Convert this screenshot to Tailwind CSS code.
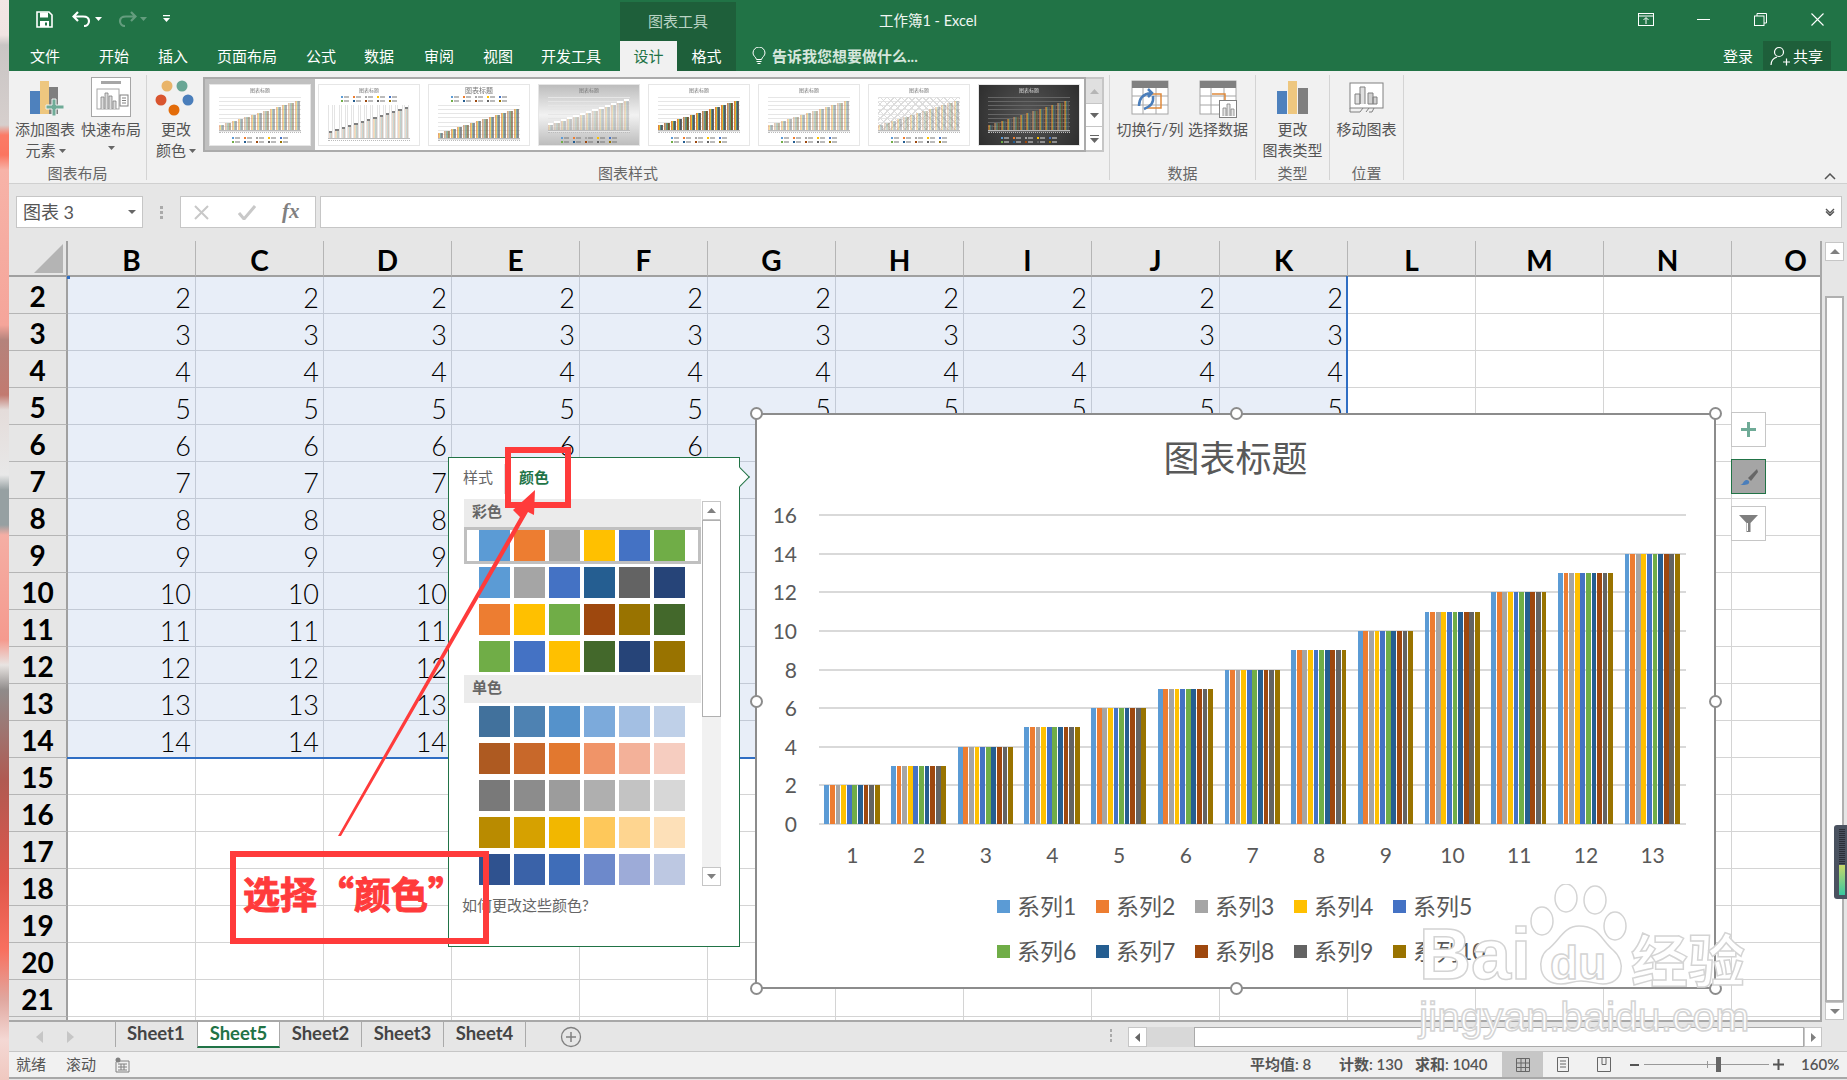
<!DOCTYPE html>
<html lang="zh">
<head>
<meta charset="utf-8">
<title>工作簿1 - Excel</title>
<script src="https://cdn.jsdelivr.net/npm/@tailwindcss/browser@4"></script>
</head>
<body class="relative flex w-[1847px] h-[1080px] overflow-hidden bg-[#e6e6e6] [font-family:Lato,'Noto_Sans_CJK_SC',sans-serif]">

<!-- blurred desktop strip on the left -->
<div class="w-[9px] shrink-0 h-full bg-[linear-gradient(180deg,#f3e6e4_0,#f1e4e2_35px,#c9c5c4_45px,#d6cfcd_125px,#fb7b66_135px,#fb7560_155px,#f7b3a8_170px,#f5a59a_325px,#b4837c_340px,#c27a70_395px,#e4dcda_410px,#e8e8e8_475px,#96a0a2_490px,#96a0a2_525px,#f5aea4_535px,#f59a8e_640px,#e8e4e2_665px,#8f8b8a_690px,#b05a52_780px,#e0564a_880px,#f8705f_950px,#e0a8a0_1000px,#f4d8d4_1040px,#f0c8c0_1080px)]"></div>

<div class="flex flex-col flex-1 min-w-0">

  <!-- title bar -->
  <div class="flex h-[41px] bg-[#217346] text-white shrink-0">
    <div class="flex items-center w-[611px] shrink-0 pl-[27px] pb-[3px]">
      <svg width="17" height="17" viewBox="0 0 17 17" class="mr-[19px]"><path d="M1 1h12l3 3v12H1z" fill="none" stroke="#fff" stroke-width="1.6"/><rect x="4" y="1.5" width="8" height="5" fill="#fff"/><rect x="4" y="10" width="9" height="6" fill="#fff"/><rect x="9" y="11.5" width="2" height="3" fill="#217346"/></svg>
      <svg width="20" height="16" viewBox="0 0 20 16" class="mr-[3px]"><path d="M6 1 1.5 5.5 6 10M2 5.5h9c4 0 6 2 6 4.5s-2 5-5 5" fill="none" stroke="#fff" stroke-width="2.2"/></svg>
      <svg width="7" height="4" viewBox="0 0 7 4" class="mr-[15px]"><path d="M0 0h7L3.5 4z" fill="#fff"/></svg>
      <svg width="20" height="16" viewBox="0 0 20 16" class="mr-[3px] opacity-30"><path d="M14 1l4.500 4.500-4.500 4.500M18 5.500H9c-4 0-6 2-6 4.500s2 5 5 5" fill="none" stroke="#fff" stroke-width="2.2"/></svg>
      <svg width="7" height="4" viewBox="0 0 7 4" class="mr-[16px] opacity-30"><path d="M0 0h7L3.500 4z" fill="#fff"/></svg>
      <svg width="7" height="8" viewBox="0 0 7 8"><path d="M0 0h7v1.200H0zM0 3h7L3.500 7z" fill="#fff"/></svg>
    </div>
    <div class="w-[116px] shrink-0 mt-[2px] bg-[#1e5f3a] text-center text-[15px] leading-[39px] text-[#b9d3c3]">图表工具</div>
    <div class="w-[143px] shrink-0"></div>
    <div class="w-[100px] shrink-0 text-[14.5px] leading-[42px] whitespace-nowrap text-[#f0f6f2]">工作簿1 - Excel</div>
    <div class="flex-1 flex items-center pb-[2px] pl-[659px]">
      <svg width="16" height="13" viewBox="0 0 16 13" class="mr-[43px]"><rect x=".5" y=".5" width="15" height="12" fill="none" stroke="#fff"/><path d="M1 3h14M8 11V5M5.500 7 8 4.500 10.500 7" fill="none" stroke="#fff"/></svg>
      <div class="w-[13px] h-[1.500px] bg-white mr-[44px]"></div>
      <svg width="13" height="13" viewBox="0 0 13 13" class="mr-[44px]"><path d="M3 3V.5h9.500V10H10" fill="none" stroke="#fff"/><rect x=".5" y="3" width="9.500" height="9.500" fill="none" stroke="#fff"/></svg>
      <svg width="13" height="13" viewBox="0 0 13 13"><path d="M.5.5l12 12M12.500.5l-12 12" stroke="#fff" stroke-width="1.100"/></svg>
    </div>
  </div>

  <!-- ribbon tabs -->
  <div class="flex h-[30px] bg-[#217346] text-white text-[15px] leading-[30px] shrink-0">
    <div class="flex w-[611px] shrink-0 pl-[21px]">
      <span class="w-[69px]">文件</span>
      <span class="w-[59px]">开始</span>
      <span class="w-[59px]">插入</span>
      <span class="w-[89px]">页面布局</span>
      <span class="w-[58px]">公式</span>
      <span class="w-[60px]">数据</span>
      <span class="w-[59px]">审阅</span>
      <span class="w-[58px]">视图</span>
      <span class="whitespace-nowrap">开发工具</span>
    </div>
    <div class="flex w-[116px] shrink-0 bg-[#1e5f3a]">
      <div class="w-[57px] bg-[#f1f1f1] text-[#217346] text-center">设计</div>
      <div class="w-[59px] text-center">格式</div>
    </div>
    <div class="flex items-center w-[987px] shrink-0 pl-[16px] font-bold text-[#d5e6dc]">
      <svg width="14" height="18" viewBox="0 0 14 18" class="mr-[6px]"><path d="M4.500 12.500C4 10 1 9 1 6a6 6 0 0 1 12 0c0 3-3 4-3.500 6.500z" fill="none" stroke="#fff"/><path d="M4.500 14.500h5M5.500 16.500h3" stroke="#fff"/></svg>
      <span class="whitespace-nowrap">告诉我您想要做什么...</span>
    </div>
    <div class="flex items-center w-[30px] shrink-0 whitespace-nowrap">登录</div>
    <div class="flex items-center w-[68px] shrink-0 ml-[10px] bg-[#1e5f3a] h-[29px] pl-[7px]">
      <svg width="20" height="20" viewBox="0 0 20 20" class="mr-[3px] shrink-0"><circle cx="9" cy="6" r="4.500" fill="none" stroke="#fff" stroke-width="1.200"/><path d="M1 19c0-5 3-7 6-8M13 16h7M16.500 12.500v7" fill="none" stroke="#fff" stroke-width="1.200"/></svg>
      <span class="whitespace-nowrap">共享</span>
    </div>
  </div>

  <!-- ribbon -->
  <div class="flex h-[113px] bg-[#f1f1f1] border-b border-[#d0d0d0] text-[15px] text-[#555] shrink-0">

    <div class="flex flex-col w-[138px] h-[105px] mt-[4px] border-r border-[#d4d4d4]">
      <div class="flex h-[88px] pt-[5px] pl-[6px]">
        <div class="flex flex-col items-center w-[60px]">
          <svg width="36" height="39" viewBox="0 0 36 39" class="ml-[3px]"><rect x="1" y="11" width="10" height="23" fill="#4e81bd"/><rect x="11" y="1" width="9" height="33" fill="#eec77f"/><rect x="20" y="7" width="9" height="27" fill="#7f7f7f"/><path d="M23 19h4v6h8v4h-8v7h-4v-7h-6v-4h6z" fill="#6fab97" stroke="#f1f1f1"/></svg>
          <div class="leading-[21px] whitespace-nowrap">添加图表</div>
          <div class="flex items-center leading-[21px] whitespace-nowrap ml-[1px]">元素<svg width="7" height="4" class="ml-[3px]"><path d="M0 0h7L3.500 4z" fill="#666"/></svg></div>
        </div>
        <div class="flex flex-col items-center w-[60px] ml-[6px]">
          <div class="h-[39px] -mt-[3px] mb-[3px]">
            <svg width="40" height="40" viewBox="0 0 40 40"><rect x=".5" y=".5" width="39" height="39" fill="#fff" stroke="#a6a6a6"/><rect x="10" y="4" width="20" height="3" fill="#a6a6a6"/><rect x="6" y="12" width="22" height="20" fill="none" stroke="#a6a6a6"/><path d="M10 32V20h3v12M14 32V16h3v16M18 32V19h3v13M22 32V24h3v8" fill="#ddd" stroke="#808080" stroke-width=".8"/><rect x="29" y="18" width="8" height="11" fill="#fff" stroke="#808080"/><path d="M31 21h4M31 23.500h4M31 26h4" stroke="#808080"/></svg>
          </div>
          <div class="leading-[21px] whitespace-nowrap">快速布局</div>
          <svg width="7" height="4" class="mt-[6px]"><path d="M0 0h7L3.500 4z" fill="#666"/></svg>
        </div>
      </div>
      <div class="h-[17px] text-center leading-[20px] text-[#666]">图表布局</div>
    </div>

    <div class="flex flex-col w-[963px] h-[105px] mt-[4px] border-r border-[#d4d4d4]">
      <div class="flex h-[88px]">
        <div class="flex flex-col items-center w-[56px] pt-[5px]">
          <svg width="40" height="39" viewBox="0 0 40 39"><circle cx="12" cy="6" r="5.500" fill="#e9b469"/><circle cx="27" cy="6" r="5.500" fill="#69a695"/><circle cx="6" cy="20" r="5.500" fill="#d9552f"/><circle cx="33" cy="20" r="5.500" fill="#4a7ebb"/><circle cx="19" cy="30" r="5.500" fill="#e36c0a"/></svg>
          <div class="leading-[21px] whitespace-nowrap ml-[2px]">更改</div>
          <div class="flex items-center leading-[21px] whitespace-nowrap ml-[2px]">颜色<svg width="7" height="4" class="ml-[3px]"><path d="M0 0h7L3.500 4z" fill="#666"/></svg></div>
        </div>
        <div class="flex h-[75px] mt-[2px]">
          <div id="gallery" class="flex items-center w-[883px] h-[75px] bg-white border-2 border-[#ababab] gap-[10px]"></div>
          <div class="flex flex-col w-[18px] h-[75px] border-y-2 border-r-2 border-[#c6c6c6]">
            <div class="flex items-center justify-center h-[25px] bg-[#e0e0e0] border-b border-[#c6c6c6]"><svg width="9" height="5"><path d="M0 5h9L4.500 0z" fill="#b5b5b5"/></svg></div>
            <div class="flex items-center justify-center h-[23px] bg-white border-b border-[#c6c6c6]"><svg width="9" height="5"><path d="M0 0h9L4.500 5z" fill="#666"/></svg></div>
            <div class="flex flex-col items-center justify-center flex-1 bg-white"><div class="w-[9px] h-[1px] bg-[#666] mb-[2px]"></div><svg width="9" height="5"><path d="M0 0h9L4.500 5z" fill="#666"/></svg></div>
          </div>
        </div>
      </div>
      <div class="h-[17px] text-center leading-[20px] text-[#666]">图表样式</div>
    </div>

    <div class="flex flex-col w-[146px] h-[105px] mt-[4px] border-r border-[#d4d4d4]">
      <div class="flex h-[88px] pt-[5px] pl-[7px]">
        <div class="flex flex-col items-center w-[66px]">
          <svg width="38" height="39" viewBox="0 0 38 39"><rect x="1" y="1" width="36" height="33" fill="#fff" stroke="#a6a6a6"/><rect x="1" y="1" width="36" height="7" fill="#808080"/><path d="M1 16h36M1 25h36M12 8v26M25 8v26" stroke="#a6a6a6"/><path d="M14 14h16v14H14" fill="none" stroke="#e08a3c" stroke-width="1.500"/><path d="M8 26c0-8 4-12 12-13M17 9l4 4-4 4M22 16c1 7-2 10-9 13" fill="none" stroke="#4a7ebb" stroke-width="2.500"/></svg>
          <div class="leading-[21px] whitespace-nowrap">切换行/列</div>
        </div>
        <div class="flex flex-col items-center w-[66px] ml-[2px]">
          <svg width="38" height="39" viewBox="0 0 38 39"><rect x="1" y="1" width="36" height="33" fill="#fff" stroke="#a6a6a6"/><rect x="1" y="1" width="36" height="7" fill="#808080"/><path d="M1 16h36M1 25h36M12 8v26M25 8v26" stroke="#a6a6a6"/><path d="M13 14h13v14" fill="none" stroke="#e08a3c" stroke-width="1.500"/><rect x="20.500" y="20.500" width="17" height="17" fill="#fff" stroke="#808080"/><path d="M24 36V28h3v8M28 36V24h3v12M32 36V29h3v7" fill="#e6e6e6" stroke="#808080" stroke-width=".8"/></svg>
          <div class="leading-[21px] whitespace-nowrap">选择数据</div>
        </div>
      </div>
      <div class="h-[17px] text-center leading-[20px] text-[#666]">数据</div>
    </div>

    <div class="flex flex-col w-[74px] h-[105px] mt-[4px] border-r border-[#d4d4d4]">
      <div class="flex flex-col items-center h-[88px] pt-[5px]">
        <svg width="32" height="39" viewBox="0 0 32 39"><rect x="0" y="11" width="10" height="23" fill="#4e81bd"/><rect x="11" y="1" width="9" height="33" fill="#eec77f"/><rect x="21" y="8" width="10" height="26" fill="#7f7f7f"/></svg>
        <div class="leading-[21px] whitespace-nowrap">更改</div>
        <div class="leading-[21px] whitespace-nowrap">图表类型</div>
      </div>
      <div class="h-[17px] text-center leading-[20px] text-[#666]">类型</div>
    </div>

    <div class="flex flex-col w-[74px] h-[105px] mt-[4px] border-r border-[#d4d4d4]">
      <div class="flex flex-col items-center h-[88px] pt-[7px]">
        <svg width="36" height="37" viewBox="0 0 36 37"><rect x="1" y="1" width="33" height="25" fill="#fff" stroke="#808080"/><path d="M6 22V12h5v10zM11 22V5h5v17" fill="#e0e0e0" stroke="#808080"/><path d="M19 22V11h5v11zM24 22V15h4v7z" fill="#d0d0d0" stroke="#808080"/><path d="M1 26v4h10l3-4M17 30l3-4M20 30h3l2-4" fill="none" stroke="#808080"/></svg>
        <div class="leading-[21px] whitespace-nowrap">移动图表</div>
      </div>
      <div class="h-[17px] text-center leading-[20px] text-[#666]">位置</div>
    </div>

    <div class="flex flex-1 items-end justify-end pb-[3px] pr-[11px]">
      <svg width="12" height="7" viewBox="0 0 12 7"><path d="M1 6l5-5 5 5" fill="none" stroke="#555" stroke-width="1.500"/></svg>
    </div>
  </div>

  <!-- formula bar -->
  <div class="flex items-start h-[57px] pt-[12px] pl-[7px] shrink-0 text-[#555]">
    <div class="flex items-center justify-between w-[127px] h-[32px] bg-white border border-[#c6c6c6] pl-[6px] pr-[6px] text-[18px]"><span>图表 3</span><svg width="8" height="4"><path d="M0 0h8L4 4z" fill="#666"/></svg></div>
    <div class="flex flex-col w-[37px] h-[32px] items-center justify-center gap-[2px]"><i class="block w-[3px] h-[3px] bg-[#aaa]"></i><i class="block w-[3px] h-[3px] bg-[#aaa]"></i><i class="block w-[3px] h-[3px] bg-[#aaa]"></i></div>
    <div class="flex items-center w-[136px] h-[32px] bg-white border border-[#c6c6c6]">
      <svg width="15" height="15" viewBox="0 0 15 15" class="ml-[13px]"><path d="M1 1l13 13M14 1 1 14" stroke="#c8c8c8" stroke-width="2"/></svg>
      <svg width="18" height="15" viewBox="0 0 18 15" class="ml-[29px]"><path d="M1 8l5 6L17 1" fill="none" stroke="#c8c8c8" stroke-width="3"/></svg>
      <span class="ml-[26px] text-[21px] italic font-bold text-[#808080] [font-family:'Liberation_Serif',serif]">fx</span>
    </div>
    <div class="flex items-center justify-end w-[1522px] h-[32px] ml-[4px] bg-white border border-[#c6c6c6] pr-[6px]"><svg width="10" height="8" viewBox="0 0 10 8"><path d="M1 1l4 4 4-4M1 3.500l4 4 4-4" fill="none" stroke="#555" stroke-width="1.400"/></svg></div>
  </div>

  <!-- sheet area -->
  <div class="flex h-[781px] shrink-0">
    <div id="grid" class="w-[1813px] h-[781px] overflow-hidden grid grid-cols-[59px_repeat(14,128px)] grid-rows-[36px] auto-rows-[37px] border-r-2 border-b-2 border-[#a8a8a8] bg-white text-[#000]"></div>
    <div class="flex flex-col w-[19px] ml-[3px] mt-[1px] h-[780px] bg-[#e6e6e6]">
      <div class="flex items-center justify-center h-[19px] bg-white border border-[#c6c6c6]"><svg width="10" height="5"><path d="M0 5h10L5 0z" fill="#808080"/></svg></div>
      <div class="h-[35px]"></div>
      <div class="h-[706px] bg-white border-2 border-[#b0b0b0]"></div>
      <div class="flex items-center justify-center h-[18px] bg-white border border-[#c6c6c6]"><svg width="10" height="5"><path d="M0 0h10L5 5z" fill="#808080"/></svg></div>
    </div>
  </div>

  <!-- sheet tabs -->
  <div class="flex items-start h-[29px] shrink-0 text-[#444] text-[18.500px] font-bold">
    <svg width="8" height="12" viewBox="0 0 8 12" class="ml-[27px] mt-[9px]"><path d="M7 0v12L0 6z" fill="#c6c6c6"/></svg>
    <svg width="8" height="12" viewBox="0 0 8 12" class="ml-[22px] mt-[9px]"><path d="M1 0v12l7-6z" fill="#c6c6c6"/></svg>
    <div class="w-[1px] h-[25px] bg-[#aaa] ml-[41px]"></div>
    <div class="w-[81px] h-[25px] pl-[11px] leading-[22px]">Sheet1</div>
    <div class="w-[83px] h-[26px] bg-white border-x border-[#aaa] border-b-2 border-b-[#217346] text-center text-[#217346] leading-[22px]">Sheet5</div>
    <div class="w-[81px] h-[25px] text-center leading-[22px]">Sheet2</div>
    <div class="w-[1px] h-[25px] bg-[#aaa]"></div>
    <div class="w-[81px] h-[25px] text-center leading-[22px]">Sheet3</div>
    <div class="w-[1px] h-[25px] bg-[#aaa]"></div>
    <div class="w-[81px] h-[25px] text-center leading-[22px]">Sheet4</div>
    <div class="w-[1px] h-[25px] bg-[#aaa]"></div>
    <svg width="22" height="22" viewBox="0 0 22 22" class="ml-[34px] mt-[4px]"><circle cx="11" cy="11" r="9.500" fill="none" stroke="#808080" stroke-width="1.300"/><path d="M11 6v10M6 11h10" stroke="#808080" stroke-width="1.500"/></svg>
    <div class="flex flex-col gap-[2px] ml-[528px] mt-[7px]"><i class="block w-[2px] h-[3px] bg-[#aaa]"></i><i class="block w-[2px] h-[3px] bg-[#aaa]"></i><i class="block w-[2px] h-[3px] bg-[#aaa]"></i></div>
    <div class="flex items-center justify-center w-[19px] h-[20px] ml-[16px] mt-[5px] bg-white border border-[#c6c6c6]"><svg width="5" height="9"><path d="M5 0v9L0 4.500z" fill="#666"/></svg></div>
    <div class="w-[47px] h-[20px] mt-[5px] bg-[#d8d8d8]"></div>
    <div class="w-[610px] h-[20px] mt-[5px] bg-white border border-[#aaa]"></div>
    <div class="flex items-center justify-center w-[18px] h-[20px] mt-[5px] bg-white border border-[#c6c6c6]"><svg width="5" height="9"><path d="M0 0v9l5-4.500z" fill="#808080"/></svg></div>
  </div>

  <!-- status bar -->
  <div class="flex items-center h-[28px] bg-[#f1f1f1] border-t border-[#c6c6c6] border-b-2 border-b-[#a8a8a8] shrink-0 text-[15px] text-[#555]">
    <span class="ml-[7px] whitespace-nowrap">就绪</span>
    <span class="ml-[20px] whitespace-nowrap">滚动</span>
    <svg width="15" height="16" viewBox="0 0 15 16" class="ml-[19px]"><circle cx="3" cy="3" r="2.500" fill="#808080"/><path d="M3 4h11v11H1V5M3 7h9M3 10h9M3 13h9M6 7v6M9 7v6" fill="none" stroke="#808080"/></svg>
    <span class="ml-[1120px] w-[89px] font-semibold whitespace-nowrap">平均值: 8</span>
    <span class="w-[76px] font-semibold whitespace-nowrap">计数: 130</span>
    <span class="w-[87px] font-semibold whitespace-nowrap">求和: 1040</span>
    <div class="flex items-center justify-center w-[41px] h-full bg-[#c6c6c6]">
      <svg width="14" height="14" viewBox="0 0 14 14"><path d="M.5.5h13v13H.5zM.5 5h13M.5 9.500h13M5 .5v13M9.500.5v13" fill="none" stroke="#666"/></svg>
    </div>
    <svg width="12" height="15" viewBox="0 0 12 15" class="ml-[14px]"><path d="M.5.500h11v14H.5zM3 4h6M3 7h6M3 10h6" fill="none" stroke="#666"/></svg>
    <svg width="14" height="15" viewBox="0 0 14 15" class="ml-[28px]"><path d="M.5.500h13v14H.5zM5 .500v7h4v-7" fill="none" stroke="#666"/></svg>
    <div class="w-[9px] h-[2px] bg-[#555] ml-[19px]"></div>
    <div class="relative w-[125px] h-[1px] ml-[5px] bg-[#999]">
      <div class="absolute left-[63px] -top-[3px] w-[1px] h-[7px] bg-[#999]"></div>
      <div class="absolute left-[72px] -top-[7px] w-[5px] h-[15px] bg-[#666]"></div>
    </div>
    <svg width="11" height="11" viewBox="0 0 11 11" class="ml-[4px]"><path d="M5.500 0v11M0 5.500h11" stroke="#555" stroke-width="2"/></svg>
    <span class="ml-[17px] whitespace-nowrap font-semibold">160%</span>
  </div>
</div>

<!-- selection outline -->
<div class="absolute left-[67px] top-[276px] w-[1281px] h-[483px] border-r-2 border-b-2 border-[#2f6ec4]"></div>
<div class="absolute left-[67px] top-[276px] w-[3px] h-[3px] bg-[#2f6ec4]"></div>

<!-- chart -->
<div class="absolute left-[755px] top-[413px] w-[961px] h-[576px] bg-white border-2 border-[#8c8c8c] text-[#595959]">
  <div class="text-center text-[36px] leading-[50px] mt-[18px]">图表标题</div>
  <div class="relative w-[867px] h-[311px] ml-[62px] mt-[31px]">
    <div id="chart-lines"></div>
    <div id="chart-bars" class="absolute inset-0 flex items-end"></div>
  </div>
  <div id="chart-x" class="flex w-[867px] ml-[62px] h-[30px] mt-[15px] text-[21px] leading-[30px]"></div>
  <div id="chart-legend" class="grid grid-cols-[repeat(5,99px)] auto-rows-[45px] ml-[240px] mt-[14px] text-[23px]"></div>
</div>
<div id="handles"></div>

<!-- chart side buttons -->
<div class="absolute left-[1731px] top-[412px] flex flex-col gap-[12px]">
  <div class="flex items-center justify-center w-[35px] h-[35px] bg-white border border-[#c6c6c6]"><svg width="15" height="15" viewBox="0 0 15 15"><path d="M6 0h3v6h6v3H9v6H6V9H0V6h6z" fill="#6fab97"/></svg></div>
  <div class="flex items-center justify-center w-[35px] h-[35px] bg-[#a5a5a5] border border-[#217346]"><svg width="20" height="18" viewBox="0 0 20 18"><path d="M9 10 18 1l1 3-7 9z" fill="#666"/><path d="M1 17c3 0 3-4 6-5 2-.500 4 1 3 3s-5 2-9 2z" fill="#4a7ebb"/></svg></div>
  <div class="flex items-center justify-center w-[35px] h-[35px] bg-white border border-[#c6c6c6]"><svg width="19" height="17" viewBox="0 0 19 17"><path d="M0 0h19l-7.500 8v9h-4V8z" fill="#7f7f7f"/><path d="M8.500 8v8" stroke="#fff"/></svg></div>
</div>

<!-- colour flyout -->
<div class="absolute left-[448px] top-[457px] w-[292px] h-[490px] bg-white border border-[#217346] text-[15px]">
  <div class="absolute left-[284px] top-[12px] w-[14px] h-[14px] bg-white border-t border-r border-[#217346] rotate-45"></div>
  <div class="flex h-[41px] pl-[14px]">
    <span class="w-[41px] leading-[39px] text-[#666]">样式</span>
    <span class="w-[1px] h-[30px] mt-[6px] bg-[#e0e0e0]"></span>
    <span class="ml-[14px] leading-[39px] font-bold text-[#217346]">颜色</span>
  </div>
  <div class="flex pl-[15px] h-[387px]">
    <div id="swatches" class="w-[237px]"></div>
    <div class="flex flex-col w-[19px] h-[385px] ml-[1px] mt-[2px] bg-[#f1f1f1]">
      <div class="flex items-center justify-center h-[19px] bg-white border border-[#c6c6c6]"><svg width="9" height="5"><path d="M0 5h9L4.500 0z" fill="#808080"/></svg></div>
      <div class="h-[197px] bg-white border border-[#b0b0b0]"></div>
      <div class="flex-1"></div>
      <div class="flex items-center justify-center h-[19px] bg-white border border-[#c6c6c6]"><svg width="9" height="5"><path d="M0 0h9L4.500 5z" fill="#808080"/></svg></div>
    </div>
  </div>
  <div class="pl-[13px] mt-[9px] text-[#666] leading-[20px] whitespace-nowrap">如何更改这些颜色?</div>
</div>

<!-- watermark -->
<div class="absolute left-[1419px] top-[884px] w-[340px] h-[150px] text-white [-webkit-text-stroke:1.500px_#d4d4d4]">
  <span class="absolute left-0 top-[34px] text-[72px] leading-[72px] font-bold [font-family:'Liberation_Sans',sans-serif]">Bai</span>
  <svg class="absolute left-[110px] top-0" width="100" height="102" viewBox="0 0 100 102"><g fill="#fff" fill-opacity=".6" stroke="#d4d4d4" stroke-width="1.500"><ellipse cx="37" cy="14" rx="11" ry="14"/><ellipse cx="66" cy="16" rx="11" ry="14"/><ellipse cx="13" cy="37" rx="11" ry="14"/><ellipse cx="86" cy="42" rx="11" ry="14"/><path d="M50 42c-16 0-20 16-32 24-10 8-10 34 14 34 8 0 12-3 20-3 10 0 14 3 22 3 20 0 24-22 10-34-12-10-14-24-34-24z"/></g></svg>
  <span class="absolute left-[131px] top-[56px] text-[46px] leading-[46px] font-bold [font-family:'Liberation_Sans',sans-serif]">du</span>
  <span class="absolute left-[212px] top-[46px] text-[57px] leading-[60px] font-bold whitespace-nowrap">经验</span>
  <span class="absolute left-0 top-[113px] text-[41px] leading-[40px] [font-family:'Liberation_Sans',sans-serif] whitespace-nowrap">jingyan.baidu.com</span>
</div>

<!-- small dark widget on the right edge -->
<div class="absolute left-[1834px] top-[825px] w-[13px] h-[74px] rounded-l-[3px] bg-[#4a5260] pl-[5px] pt-[4px]">
  <div class="w-[6px] h-[66px] bg-[repeating-linear-gradient(180deg,#2a2f38_0,#2a2f38_1px,#4a5260_1px,#4a5260_2px)] relative">
    <div class="absolute bottom-0 w-full h-[30px] bg-[linear-gradient(180deg,#c8d86a,#38c8a0)]"></div>
  </div>
</div>

<!-- red annotation -->
<svg class="absolute left-0 top-0 pointer-events-none" width="1847" height="1080" viewBox="0 0 1847 1080"><path d="M338 836 520 517l-7-7 22-20-1 25-6-3-187 324z" fill="#ff3b3b"/></svg>
<div class="absolute left-[505px] top-[447px] w-[66px] h-[61px] border-[6px] border-[#ff3b3b]"></div>
<div class="absolute left-[230px] top-[851px] flex items-center w-[259px] h-[93px] pl-[7px] pb-[8px] border-[6px] border-[#ff3b3b] text-[#ff3b3b] text-[37px] font-bold whitespace-nowrap [-webkit-text-stroke:1px_#ff3b3b] [font-family:'Noto_Sans_CJK_SC',sans-serif]">选择“颜色”</div>

<script>
// Shared data
const seriesColors = ['#5b9bd5','#ed7d31','#a5a5a5','#ffc000','#4472c4','#70ad47','#255e91','#9e480e','#636363','#997300'];

// Sheet grid
const grid = document.getElementById('grid');
const columns = ['B','C','D','E','F','G','H','I','J','K','L','M','N','O'];
let gridHTML = `<div class="bg-[#e6e6e6] border-r-2 border-b-2 border-[#a0a0a0] flex items-end justify-end pr-[3px] pb-[2px]"><svg width="29" height="29"><path d="M29 0v29H0z" fill="#b4b4b4"/></svg></div>`;
columns.forEach(c => {
  gridHTML += `<div class="bg-[#e6e6e6] border-r border-b-2 border-r-[#b5b5b5] border-b-[#a0a0a0] text-center text-[28px] font-bold leading-[39px]">${c}</div>`;
});
for (let row = 2; row <= 22; row++) {
  const selected = row <= 14;
  gridHTML += `<div class="bg-[#e6e6e6] border-r-2 border-b border-r-[#a0a0a0] border-b-[#b5b5b5] text-center text-[28px] font-bold leading-[39px]">${row <= 21 ? row : ''}</div>`;
  columns.forEach((c, i) => {
    if (selected && i < 10) {
      // cells fully behind the chart or the flyout stay empty
      const covered = (row >= 6 && i >= 5) || (row >= 7 && (i === 3 || i === 4));
      gridHTML += `<div class="bg-[#e8eef8] border-r border-b border-[#c3cad6] text-right pr-[4px] text-[27px] font-light leading-[41px]">${covered ? '' : row}</div>`;
    } else {
      gridHTML += `<div class="border-r border-b border-[#d4d4d4]"></div>`;
    }
  });
}
grid.innerHTML = gridHTML;

// Chart
const plotHeight = 309, unit = plotHeight / 16;
let linesHTML = '';
for (let v = 0; v <= 16; v += 2) {
  const y = plotHeight - v * unit;
  linesHTML += `<div class="absolute left-0 right-0 h-[2px] bg-[#d9d9d9]" style="top:${y}px"></div>`;
  linesHTML += `<div class="absolute right-[889px] w-[30px] text-right text-[21px] leading-[24px]" style="top:${y - 11}px">${v}</div>`;
}
document.getElementById('chart-lines').innerHTML = linesHTML;

let barsHTML = '', xHTML = '';
for (let i = 1; i <= 13; i++) {
  barsHTML += `<div class="flex flex-1 justify-center items-end h-full pb-[1px]">`;
  seriesColors.forEach(col => {
    barsHTML += `<div class="w-[4.800px] mr-[0.800px] relative" style="height:${(i + 1) * unit}px;background:${col}"></div>`;
  });
  barsHTML += `</div>`;
  xHTML += `<div class="flex-1 text-center">${i}</div>`;
}
document.getElementById('chart-bars').innerHTML = barsHTML;
document.getElementById('chart-x').innerHTML = xHTML;

document.getElementById('chart-legend').innerHTML = seriesColors.map((col, i) => `
  <div class="flex items-center h-[45px] whitespace-nowrap"><span class="w-[13px] h-[13px] mr-[7px]" style="background:${col}"></span>系列${i + 1}</div>`).join('');

// Chart selection handles
const handlePoints = [[756,413],[1236,413],[1715,413],[756,701],[1715,701],[756,988],[1236,988],[1715,988]];
document.getElementById('handles').innerHTML = handlePoints.map(p =>
  `<div class="absolute w-[13px] h-[13px] rounded-full bg-white border-2 border-[#8c8c8c]" style="left:${p[0] - 6}px;top:${p[1] - 6}px"></div>`).join('');

// Colour list
const colourRows = [
  ['彩色'],
  ['#5b9bd5','#ed7d31','#a5a5a5','#ffc000','#4472c4','#70ad47'],
  ['#5b9bd5','#a5a5a5','#4472c4','#255e91','#636363','#264478'],
  ['#ed7d31','#ffc000','#70ad47','#9e480e','#997300','#43682b'],
  ['#70ad47','#4472c4','#ffc000','#43682b','#264478','#997300'],
  ['单色'],
  ['#41719c','#4e82b2','#5592cb','#7caadb','#a3bfe3','#bfd0e8'],
  ['#ae5a21','#c8682a','#e2782f','#f09468','#f3b199','#f6cdc0'],
  ['#797979','#8c8c8c','#9c9c9c','#afafaf','#c3c3c3','#d7d7d7'],
  ['#b98b00','#d6a100','#f2b700','#fec85a','#fed590','#fde0b8'],
  ['#2f528f','#3a62a8','#3f6db8','#6d89cb','#9dabd8','#bdc8e2']
];
document.getElementById('swatches').innerHTML = colourRows.map((row, idx) => {
  if (row.length === 1) {
    return `<div class="h-[28px] bg-[#ebebeb] pl-[8px] leading-[24px] font-bold text-[#666]">${row[0]}</div>`;
  }
  const cells = row.map(col => `<span class="w-[31px] h-[31px] mr-[4px]" style="background:${col}"></span>`).join('');
  if (idx === 1) {
    return `<div class="flex items-center h-[37px] pl-[12px] border-[3px] border-[#c0c0c0]">${cells}</div>`;
  }
  return `<div class="flex items-center h-[37px] pl-[15px]">${cells}</div>`;
}).join('');

// Chart style gallery
const blend = 'linear-gradient(90deg,#5b9bd5,#ed7d31,#a5a5a5,#ffc000,#4472c4,#70ad47,#255e91,#9e480e,#636363,#997300)';
const thumbs = [
  { opacity: .5, selected: true },
  { opacity: .35, legendTop: true, columns: true, cap: '#808080' },
  { opacity: .7, legendTop: true, titleSize: 7 },
  { opacity: .25, bg: 'linear-gradient(180deg,#bdbdbd,#f2f2f2 50%,#bdbdbd)', cap: '#fff' },
  { opacity: 1 },
  { opacity: .45 },
  { opacity: .35, hatch: true },
  { opacity: .6, bg: 'radial-gradient(circle,#555,#2e2e2e)', night: true }
];
document.getElementById('gallery').innerHTML = thumbs.map(t => {
  const textCol = t.night ? '#ddd' : '#777';
  const titleHTML = `<div class="text-center leading-[9px] pt-[1px]" style="font-size:${t.titleSize || 5}px;color:${textCol}">图表标题</div>`;
  const legendRow = n => `<div class="flex justify-center gap-[4px] h-[4px] items-center">${seriesColors.slice(n, n + 5).map(col =>
    `<span class="flex items-center"><i class="block w-[2px] h-[2px] mr-[1px]" style="background:${col}"></i><i class="block w-[5px] h-[2px]" style="background:${textCol};opacity:.5"></i></span>`).join('')}</div>`;
  const legendHTML = legendRow(0) + legendRow(5);
  let bars = '', lines = '';
  for (let i = 1; i <= 13; i++) {
    const h = (i + 1) / 16 * 100;
    bars += `<div class="flex-1 mr-[1px] relative ${t.columns ? 'border-x border-[#e4e4e4]' : ''}" style="height:${t.columns ? 100 : h}%">`
      + `<div class="absolute bottom-0 left-0 right-0" style="height:${t.columns ? h : 100}%;background:${blend};opacity:${t.opacity}"></div>`
      + (t.cap ? `<div class="absolute left-0 right-0 h-[2px]" style="bottom:${t.columns ? h : 100}%;background:${t.cap}"></div>` : '')
      + `</div>`;
  }
  for (let i = 0; i <= 8; i++) {
    lines += `<div class="absolute left-0 right-0 h-[1px]" style="top:${i * 12.5}%;background:${t.night ? '#666' : '#e6e6e6'}"></div>`;
  }
  const hatch = t.hatch ? `<div class="absolute inset-0 bg-[repeating-linear-gradient(45deg,#ddd_0,#ddd_1px,transparent_1px,transparent_5px),repeating-linear-gradient(-45deg,#ddd_0,#ddd_1px,transparent_1px,transparent_5px)]"></div>` : '';
  const plot = `<div class="relative flex-1 mx-[9px] mt-[2px] mb-[1px] min-h-0">${t.columns ? '' : lines}${hatch}<div class="absolute inset-0 flex items-end border-b border-[#bbb]">${bars}</div></div>`;
  const axis = `<div class="h-[3px] mx-[9px] mb-[1px] border-t border-dotted border-[#bbb]"></div>`;
  const inner = `<div class="flex flex-col w-[100px] h-[60px] blur-[0.4px] outline outline-[#e6e6e6]" style="background:${t.bg || '#fff'}">${titleHTML}${t.legendTop ? legendHTML : ''}${plot}${axis}${t.legendTop ? '' : legendHTML}<div class="h-[1px]"></div></div>`;
  return t.selected
    ? `<div class="flex items-center justify-center w-[110px] h-[71px] -mr-[6px] bg-[#c0c0c0]">${inner}</div>`
    : `<div class="shrink-0">${inner}</div>`;
}).join('');
</script>
</body>
</html>
